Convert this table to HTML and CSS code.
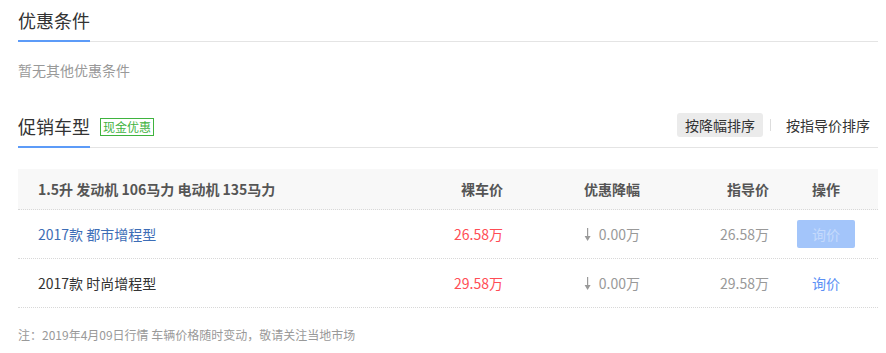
FILE: index.html
```html
<!DOCTYPE html>
<html lang="zh-CN">
<head>
<meta charset="utf-8">
<title>优惠条件</title>
<link rel="stylesheet" href="styles.css">
</head>
<body>
<div class="page">
  <section class="sec">
    <div class="sec-head">
      <h2 class="sec-title">优惠条件</h2>
    </div>
    <p class="empty">暂无其他优惠条件</p>
  </section>

  <section class="sec sec-promo">
    <div class="sec-head">
      <h2 class="sec-title">促销车型</h2>
      <span class="badge">现金优惠</span>
      <div class="sorts">
        <span class="sort active">按降幅排序</span>
        <span class="sort-sep"></span>
        <span class="sort">按指导价排序</span>
      </div>
    </div>

    <div class="table">
      <div class="row head">
        <div class="c c-name">1.5升 发动机 106马力 电动机 135马力</div>
        <div class="c c-r">裸车价</div>
        <div class="c c-r">优惠降幅</div>
        <div class="c c-r">指导价</div>
        <div class="c c-op">操作</div>
      </div>
      <div class="row">
        <div class="c c-name link">2017款 都市增程型</div>
        <div class="c c-r price">26.58万</div>
        <div class="c c-r drop"><svg class="arrow" width="7" height="13" viewBox="0 0 7 13"><rect x="3" y="0" width="1.2" height="9" fill="#9a9a9a"/><polygon points="0.6,8 6.6,8 3.6,13" fill="#9a9a9a"/></svg>0.00万</div>
        <div class="c c-r guide">26.58万</div>
        <div class="c c-op"><span class="btn">询价</span></div>
      </div>
      <div class="row">
        <div class="c c-name">2017款 时尚增程型</div>
        <div class="c c-r price">29.58万</div>
        <div class="c c-r drop"><svg class="arrow" width="7" height="13" viewBox="0 0 7 13"><rect x="3" y="0" width="1.2" height="9" fill="#9a9a9a"/><polygon points="0.6,8 6.6,8 3.6,13" fill="#9a9a9a"/></svg>0.00万</div>
        <div class="c c-r guide">29.58万</div>
        <div class="c c-op"><span class="ask">询价</span></div>
      </div>
    </div>

    <p class="note">注：2019年4月09日行情 车辆价格随时变动，敬请关注当地市场</p>
  </section>
</div>
</body>
</html>
```

FILE: styles.css
```css
* { box-sizing: border-box; }
html, body { margin: 0; padding: 0; background: #fff; }
body {
  font-family: "Noto Sans CJK SC", "Liberation Sans", sans-serif;
  color: #333;
  font-size: 14px;
}
.page { width: 886px; padding: 0 8px 0 18px; }

.sec-head {
  display: flex;
  align-items: center;
  border-bottom: 1px solid #e4e4e4;
}
.sec-title {
  margin: 0 0 -1px 0;
  font-size: 18px;
  font-weight: normal;
  line-height: 40px;
  height: 42px;
  color: #333;
  border-bottom: 2px solid #5c9bf8;
}
.empty {
  margin: 18px 0 0 0;
  font-size: 14px;
  line-height: 20px;
  color: #999;
}

.sec-promo { margin-top: 26px; }

.badge {
  margin-left: 10px;
  border: 1px solid #3fb33f;
  color: #3fb33f;
  font-size: 12px;
  line-height: 16px;
  padding: 0 2px;
  margin-top: 1px;
}
.sorts {
  margin-left: auto;
  display: flex;
  align-items: center;
  margin-bottom: 3px;
}
.sort {
  font-size: 14px;
  line-height: 24px;
  padding: 0 8px;
  color: #333;
  border-radius: 3px;
}
.sort.active { background: #ebebeb; }
.sort-sep {
  width: 1px;
  height: 12px;
  background: #ddd;
  margin: 0 7px;
}

.table { margin-top: 21px; }
.row {
  display: grid;
  grid-template-columns: 405px 80px 137px 129px 109px;
  height: 49px;
  align-items: center;
  border-bottom: 1px dotted #d8d8d8;
}
.row.head {
  height: 41px;
  background: #f8f8f8;
  font-weight: bold;
  color: #555;
}
.c { line-height: 20px; white-space: nowrap; }
.c-name { padding-left: 20px; }
.c-r { text-align: right; }
.c-op { text-align: center; padding-left: 5px; }
.link { color: #3d6db6; }
.price { color: #ff4d55; }
.drop, .guide { color: #999; }
.drop { display: flex; justify-content: flex-end; align-items: center; }
.arrow { margin-right: 8px; }
.btn {
  display: inline-block;
  width: 58px;
  height: 28px;
  line-height: 28px;
  background: #a3c5fa;
  color: #c5dafc;
  border-radius: 2px;
  vertical-align: middle;
}
.ask { color: #5b8ff5; }

.note {
  margin: 18px 0 0 0;
  font-size: 12px;
  line-height: 18px;
  color: #999;
}
```
